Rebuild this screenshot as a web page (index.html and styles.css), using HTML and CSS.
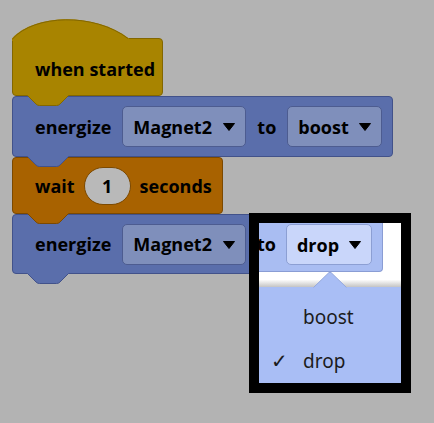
FILE: index.html
```html
<!DOCTYPE html>
<html>
<head>
<meta charset="utf-8">
<link rel="stylesheet" href="styles.css">
</head>
<body>
<div class="canvas">
  <div class="stack">
    <div class="block hat">
      <svg class="cap" width="118" height="22" viewBox="0 0 118 22">
        <path d="M0,22 L0,19.5 C22,-5 82,-7 117,19.5 L117,22 Z" fill="#a88400"/>
        <path d="M0.5,20 C22,-4.5 82,-6.5 116,19.5" fill="none" stroke="#836700" stroke-width="1"/>
      </svg>
      <span class="label">when started</span>
      <svg class="tab" width="42" height="11" viewBox="0 0 42 11">
        <path d="M0,0 L9,9 Q10.5,10.5 12.5,10.5 L29.5,10.5 Q31.5,10.5 33,9 L42,0 Z" fill="#a88400"/>
        <path d="M0.5,0.5 L9,9 Q10.5,10.5 12.5,10.5 L29.5,10.5 Q31.5,10.5 33,9 L41.5,0.5" fill="none" stroke="#836700"/>
      </svg>
    </div>
    <div class="block motor">
      <span class="label">energize</span>
      <span class="field f-magnet"><span>Magnet2</span><svg class="arrow" width="12" height="8" viewBox="0 0 12 8"><path d="M0.5,0.5 L11.5,0.5 L6,7.5 Z" fill="#000" stroke="#000" stroke-linejoin="round"/></svg></span>
      <span class="label">to</span>
      <span class="field f-boost"><span>boost</span><svg class="arrow" width="12" height="8" viewBox="0 0 12 8"><path d="M0.5,0.5 L11.5,0.5 L6,7.5 Z" fill="#000" stroke="#000" stroke-linejoin="round"/></svg></span>
      <svg class="tab" width="42" height="11" viewBox="0 0 42 11">
        <path d="M0,0 L9,9 Q10.5,10.5 12.5,10.5 L29.5,10.5 Q31.5,10.5 33,9 L42,0 Z" fill="#5a6eab"/>
        <path d="M0.5,0.5 L9,9 Q10.5,10.5 12.5,10.5 L29.5,10.5 Q31.5,10.5 33,9 L41.5,0.5" fill="none" stroke="#42528a"/>
      </svg>
    </div>
    <div class="block wait">
      <span class="label">wait</span>
      <span class="oval">1</span>
      <span class="label">seconds</span>
      <svg class="tab" width="42" height="11" viewBox="0 0 42 11">
        <path d="M0,0 L9,9 Q10.5,10.5 12.5,10.5 L29.5,10.5 Q31.5,10.5 33,9 L42,0 Z" fill="#a86200"/>
        <path d="M0.5,0.5 L9,9 Q10.5,10.5 12.5,10.5 L29.5,10.5 Q31.5,10.5 33,9 L41.5,0.5" fill="none" stroke="#7c4900"/>
      </svg>
    </div>
    <div class="block motor last">
      <span class="label">energize</span>
      <span class="field f-magnet"><span>Magnet2</span><svg class="arrow" width="12" height="8" viewBox="0 0 12 8"><path d="M0.5,0.5 L11.5,0.5 L6,7.5 Z" fill="#000" stroke="#000" stroke-linejoin="round"/></svg></span>
      <span class="label covered">to</span>
      <span class="field f-drop covered"><span>drop</span><svg class="arrow" width="12" height="8" viewBox="0 0 12 8"><path d="M0.5,0.5 L11.5,0.5 L6,7.5 Z" fill="#000" stroke="#000" stroke-linejoin="round"/></svg></span>
      <svg class="tab" width="42" height="11" viewBox="0 0 42 11">
        <path d="M0,0 L9,9 Q10.5,10.5 12.5,10.5 L29.5,10.5 Q31.5,10.5 33,9 L42,0 Z" fill="#5a6eab"/>
        <path d="M0.5,0.5 L9,9 Q10.5,10.5 12.5,10.5 L29.5,10.5 Q31.5,10.5 33,9 L41.5,0.5" fill="none" stroke="#42528a"/>
      </svg>
    </div>
  </div>

  <div class="popup">
    <div class="pop-block">
      <span class="label pop-to">to</span>
      <span class="field pop-field"><span>drop</span><svg class="arrow" width="12" height="8" viewBox="0 0 12 8"><path d="M0.5,0.5 L11.5,0.5 L6,7.5 Z" fill="#000" stroke="#000" stroke-linejoin="round"/></svg></span>
    </div>
    <div class="shade"></div>
    <div class="menu">
      <svg class="menu-arrow" width="36" height="16" viewBox="0 0 36 16">
        <path d="M0,16 L16,0.5 L18,0.5 L34,16 Z" fill="#a9bef5"/>
        <path d="M0.5,15.5 L16,0.5 L18,0.5 L33.5,15.5" fill="none" stroke="#95a8dc"/>
      </svg>
      <div class="item"><span class="check"></span><span>boost</span></div>
      <div class="item"><span class="check">✓</span><span>drop</span></div>
    </div>
  </div>
</div>
</body>
</html>
```

FILE: styles.css
```css
html, body {
  margin: 0;
  padding: 0;
  background: #b3b3b3;
  width: 434px;
  height: 423px;
  overflow: hidden;
}

.canvas {
  position: relative;
  width: 434px;
  height: 423px;
  font-family: "Open Sans", "Noto Sans", sans-serif;
}

.stack {
  display: flex;
  flex-direction: column;
  align-items: flex-start;
  padding: 38px 0 0 12px;
}

.block {
  position: relative;
  display: flex;
  align-items: center;
  gap: 11px;
  box-sizing: border-box;
  border: 1px solid;
  border-radius: 4px;
  padding: 9px 10px 9px 22px;
}

.label {
  font-weight: 700;
  font-size: 18px;
  color: #000;
  white-space: nowrap;
}

.covered {
  visibility: hidden;
}

.hat {
  background: #a88400;
  border-color: #836700;
  border-top-left-radius: 0;
  height: 58px;
  width: 151px;
  padding-top: 12px;
}

.cap {
  position: absolute;
  left: -1px;
  top: -20px;
}

.tab {
  position: absolute;
  left: 14px;
  bottom: -11px;
  z-index: 1;
}

.motor {
  background: #5a6eab;
  border-color: #42528a;
  height: 61px;
}

.wait {
  background: #a86200;
  border-color: #7c4900;
  height: 57px;
  gap: 9px;
  padding-top: 8px;
  padding-bottom: 8px;
}

.last {
  height: 60px;
}

.field {
  display: flex;
  align-items: center;
  justify-content: space-between;
  box-sizing: border-box;
  height: 41px;
  padding: 0 10px 0 10px;
  background: #7f8fbb;
  border: 1px solid #4d5c90;
  border-radius: 5px;
  font-weight: 700;
  font-size: 18px;
  color: #000;
}

.f-magnet { width: 124px; }
.f-boost { width: 95px; }
.f-drop { width: 86px; }

.arrow {
  display: block;
  margin-top: 1px;
}

.oval {
  display: flex;
  align-items: center;
  justify-content: center;
  box-sizing: border-box;
  width: 47px;
  height: 38px;
  border-radius: 19px;
  background: #b9b9b9;
  border: 1px solid #7c4900;
  font-weight: 700;
  font-size: 18px;
}

/* dropdown popup overlay */
.popup {
  position: absolute;
  left: 249px;
  top: 213px;
  width: 142px;
  height: 160px;
  border: 10px solid #000;
  background: #fff;
  overflow: hidden;
  z-index: 2;
  display: flex;
  flex-direction: column;
}

.pop-block {
  display: flex;
  align-items: flex-start;
  gap: 10px;
  box-sizing: border-box;
  width: 124px;
  height: 50px;
  padding-top: 1px;
  background: #a9bdf2;
  border-right: 1px solid #8a9dd4;
  border-bottom: 1px solid #8a9dd4;
  border-bottom-right-radius: 4px;
}

.pop-to {
  margin-left: -2px;
  line-height: 41px;
}

.pop-field {
  width: 86px;
  background: #c9d6fa;
  border-color: #8c9fd3;
}

.shade {
  height: 15px;
  background: linear-gradient(#fff 50%, #c4c4c4);
}

.menu {
  position: relative;
  flex: 1;
  background: #a9bef5;
  padding-top: 8px;
  font-family: "Noto Sans", "Open Sans", sans-serif;
  font-size: 19px;
  color: #1c1c1c;
}

.menu-arrow {
  position: absolute;
  left: 54px;
  top: -15px;
}

.item {
  display: flex;
  align-items: center;
  height: 44px;
}

.check {
  width: 44px;
  box-sizing: border-box;
  padding-left: 12px;
  font-family: "DejaVu Sans", sans-serif;
  font-size: 20px;
}
```
